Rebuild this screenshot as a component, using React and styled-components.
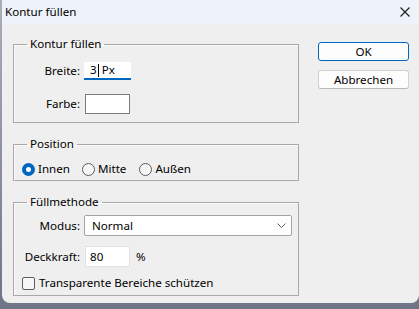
import styled, { createGlobalStyle } from 'styled-components';

const GlobalStyle = createGlobalStyle`
  html, body { margin: 0; padding: 0; }
  body {
    width: 419px;
    height: 309px;
    overflow: hidden;
    background: linear-gradient(180deg, #a9aeb8 0%, #6d7587 100%);
    font-family: "Noto Sans", "Open Sans", sans-serif;
    font-size: 11.6px;
    color: #000;
  }
`;

const Window = styled.div`
  margin-left: 2px;
  width: 417px;
  height: 303px;
  background: #efefef;
  border-radius: 0 0 8px 8px;
  overflow: hidden;
  display: flex;
  flex-direction: column;
`;

const TitleBar = styled.div`
  height: 24px;
  flex: none;
  background: #eef2f9;
  display: flex;
  align-items: center;
  justify-content: space-between;
  padding: 0 9px 0 3px;
  line-height: 16px;
`;

const Body = styled.div`
  display: flex;
  gap: 19px;
  padding: 12px 0 0 11px;
`;

const LeftCol = styled.div`
  width: 286px;
  display: flex;
  flex-direction: column;
  gap: 13px;
`;

const Group = styled.fieldset`
  margin: 0;
  padding: 0;
  min-width: 0;
  border: 1px solid #a8a8a8;
  box-shadow: inset 1px 1px 0 #fbfbfb;
`;

const Legend = styled.legend`
  margin-left: 13px;
  padding: 0 3px;
  line-height: 16px;
`;

const FormGrid = styled.div`
  display: grid;
  grid-template-columns: 66px 1fr;
  column-gap: 4px;
  row-gap: ${(p) => p.$rowGap}px;
  align-items: center;
  padding: ${(p) => p.$pad};
`;

const Label = styled.label`
  text-align: right;
  line-height: 16px;
`;

const FocusInput = styled.div`
  width: 47px;
  height: 18px;
  box-sizing: border-box;
  background: #fff;
  border-bottom: 2px solid #0067c0;
  display: flex;
  align-items: center;
  padding-left: 6px;
  line-height: 16px;
`;

const Caret = styled.span`
  width: 1px;
  height: 13px;
  background: #000;
  margin: 0 3px 0 1px;
`;

const ColorBox = styled.div`
  width: 45px;
  height: 20px;
  margin-left: 1px;
  box-sizing: border-box;
  background: #fff;
  border: 1px solid #7a7a7a;
`;

const RadioRow = styled.div`
  display: flex;
  align-items: center;
  padding: 9px 0 3px 8px;
  line-height: 16px;
`;

const RadioItem = styled.span`
  display: flex;
  align-items: center;
  gap: 3px;
  margin-right: ${(p) => p.$gap}px;
`;

const RadioDot = styled.span`
  width: 13px;
  height: 13px;
  box-sizing: border-box;
  border-radius: 50%;
  border: ${(p) => (p.$checked ? '4px solid #0067c0' : '1px solid #5c5c5c')};
  background: ${(p) => (p.$checked ? '#fff' : '#f6f6f6')};
`;

const Select = styled.div`
  width: 208px;
  height: 21px;
  box-sizing: border-box;
  background: #fff;
  border: 1px solid #a2a2a2;
  border-radius: 2px;
  display: flex;
  align-items: center;
  justify-content: space-between;
  padding: 0 5px 0 7px;
  line-height: 16px;
`;

const NumberRow = styled.div`
  display: flex;
  align-items: center;
  gap: 6px;
  line-height: 16px;
`;

const NumberInput = styled.div`
  width: 45px;
  height: 21px;
  margin-left: 1px;
  box-sizing: border-box;
  background: #fff;
  border: 1px solid #e2e2e2;
  display: flex;
  align-items: center;
  padding-left: 4px;
`;

const CheckRow = styled.div`
  grid-column: 1 / -1;
  display: flex;
  align-items: center;
  gap: 4px;
  padding-left: 8px;
  margin-top: -2px;
  line-height: 16px;
`;

const CheckBox = styled.span`
  width: 13px;
  height: 13px;
  box-sizing: border-box;
  border: 1px solid #5c5c5c;
  border-radius: 2px;
  background: #f6f6f6;
`;

const RightCol = styled.div`
  width: 91px;
  display: flex;
  flex-direction: column;
  gap: 9px;
  padding-top: 6px;
`;

const Button = styled.button`
  height: 19px;
  box-sizing: border-box;
  padding: 0;
  font: inherit;
  line-height: 16px;
  color: #000;
  background: #fdfdfd;
  border: 1px solid ${(p) => (p.$primary ? '#0067c0' : '#d0d0d0')};
  border-bottom-color: ${(p) => (p.$primary ? '#0067c0' : '#b8b8b8')};
  border-radius: 3px;
`;

const Chevron = () => (
  <svg width="9" height="5" viewBox="0 0 9 5">
    <polyline points="0.5,0.5 4.5,4.5 8.5,0.5" fill="none" stroke="#606060" strokeWidth="1" />
  </svg>
);

const CloseIcon = () => (
  <svg width="10" height="10" viewBox="0 0 10 10">
    <path d="M0.5 0.5 L9.5 9.5 M9.5 0.5 L0.5 9.5" stroke="#1b1b1b" strokeWidth="1.1" />
  </svg>
);

export default function App() {
  return (
    <>
      <GlobalStyle />
      <Window>
        <TitleBar>
          <span>Kontur füllen</span>
          <CloseIcon />
        </TitleBar>
        <Body>
          <LeftCol>
            <Group>
              <Legend>Kontur füllen</Legend>
              <FormGrid $rowGap={14} $pad="10px 0 8px 0">
                <Label>Breite:</Label>
                <FocusInput>
                  3<Caret />Px
                </FocusInput>
                <Label>Farbe:</Label>
                <ColorBox />
              </FormGrid>
            </Group>
            <Group>
              <Legend>Position</Legend>
              <RadioRow>
                <RadioItem $gap={12}>
                  <RadioDot $checked />
                  Innen
                </RadioItem>
                <RadioItem $gap={13}>
                  <RadioDot />
                  Mitte
                </RadioItem>
                <RadioItem $gap={0}>
                  <RadioDot />
                  Außen
                </RadioItem>
              </RadioRow>
            </Group>
            <Group>
              <Legend>Füllmethode</Legend>
              <FormGrid $rowGap={10} $pad="5px 6px 4px 0">
                <Label>Modus:</Label>
                <Select>
                  Normal
                  <Chevron />
                </Select>
                <Label>Deckkraft:</Label>
                <NumberRow>
                  <NumberInput>80</NumberInput>%
                </NumberRow>
                <CheckRow>
                  <CheckBox />
                  Transparente Bereiche schützen
                </CheckRow>
              </FormGrid>
            </Group>
          </LeftCol>
          <RightCol>
            <Button $primary>OK</Button>
            <Button>Abbrechen</Button>
          </RightCol>
        </Body>
      </Window>
    </>
  );
}
